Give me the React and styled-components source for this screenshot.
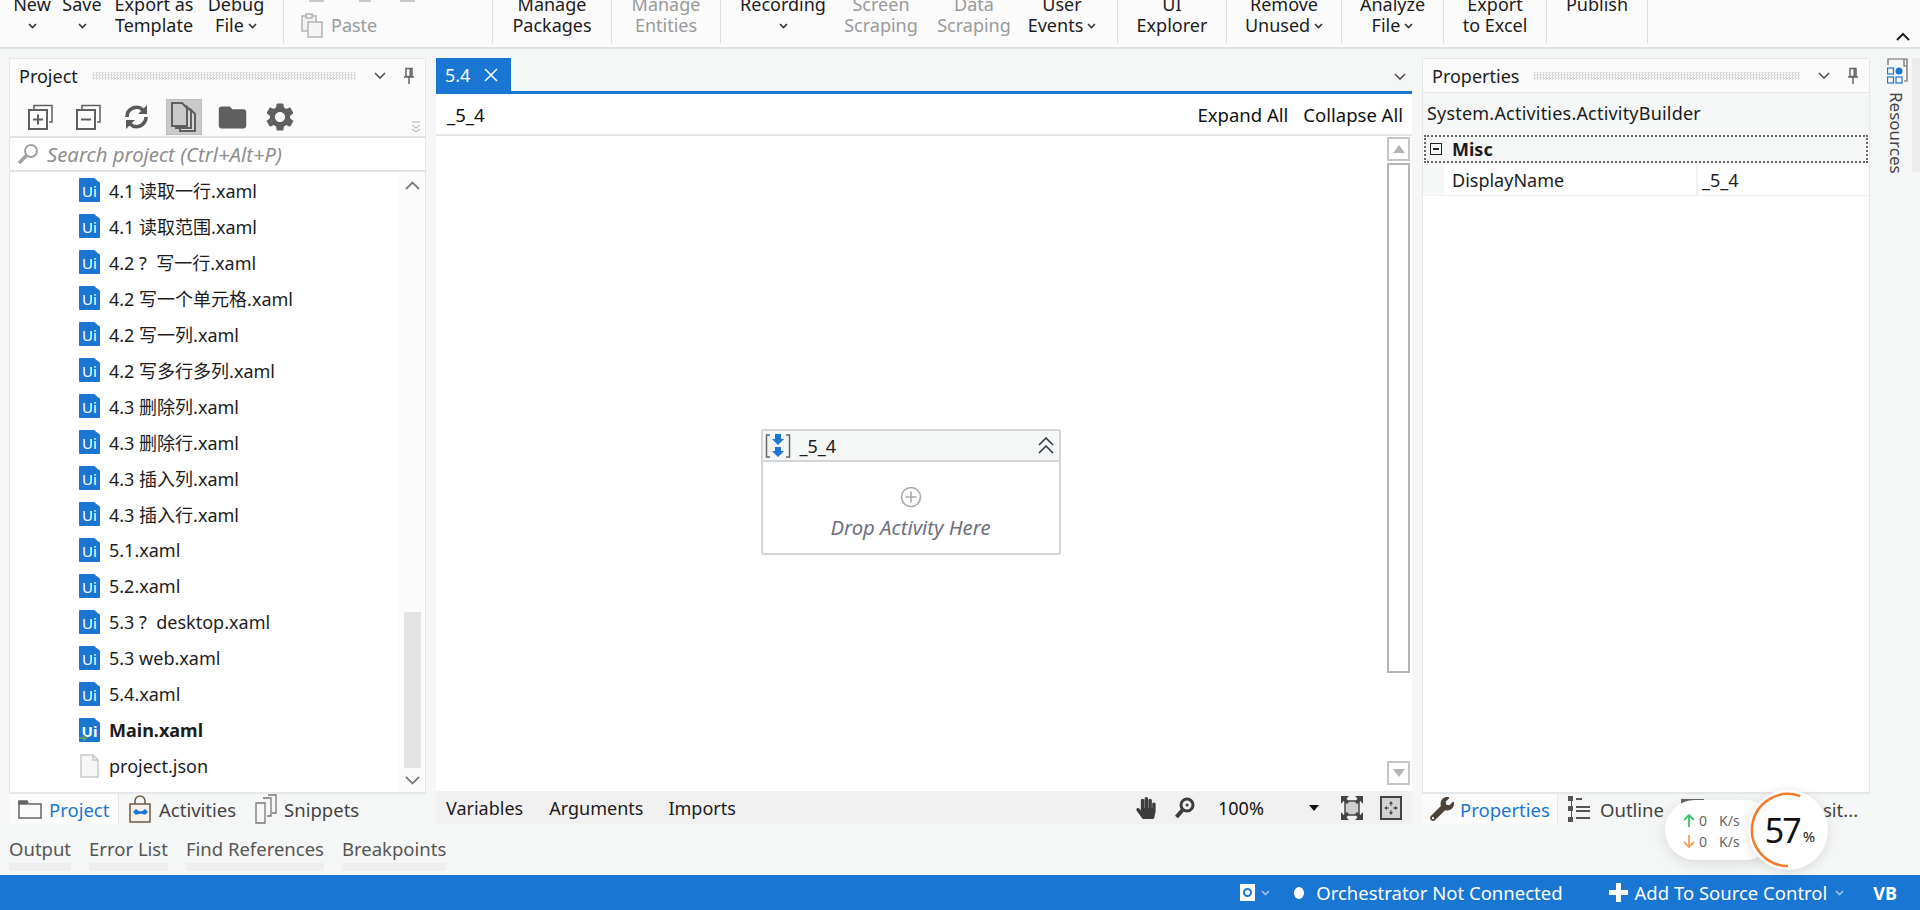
import styled, { createGlobalStyle } from 'styled-components';
import { FaHandPaper, FaWrench } from 'react-icons/fa';
import { MdSettings, MdFolder } from 'react-icons/md';

const GlobalStyle = createGlobalStyle`
  html, body { margin: 0; padding: 0; background: #f5f6f6; }
  * { box-sizing: border-box; }
  body {
    font-family: "Noto Sans", "Noto Sans CJK SC", sans-serif;
    font-size: 18px;
    color: #1c1c1c;
  }
`;

const Page = styled.div`
  position: relative;
  width: 1920px;
  height: 910px;
  overflow: hidden;
  display: flex;
  flex-direction: column;
  background: #f5f6f6;
`;

/* ribbon, cut off at the top like the capture */
const Ribbon = styled.div`
  height: 49px;
  flex: none;
  display: flex;
  align-items: flex-start;
  background: #fbfbfb;
  border-bottom: 2px solid #dfe0e3;
  overflow: hidden;
`;
const RibbonItem = styled.div`
  width: ${(p) => p.$w}px;
  flex: none;
  display: flex;
  flex-direction: column;
  align-items: center;
  margin-top: -6px;
  line-height: 21px;
  font-size: 18px;
  white-space: nowrap;
  color: ${(p) => (p.$off ? '#9a9a9a' : '#1c1c1c')};
`;
const RibbonSep = styled.div`
  width: 1px;
  height: 43px;
  flex: none;
  margin-left: ${(p) => p.$before || 0}px;
  background: #dcdde0;
`;
const Chev = styled.svg`
  width: 9px;
  height: 6px;
  margin-left: ${(p) => p.$ml || 0}px;
  fill: none;
  stroke: ${(p) => p.$c || '#333'};
  stroke-width: 1.6;
`;
const ChevLine = styled.span`
  height: 21px;
  display: flex;
  align-items: center;
`;
const ClipGroup = styled.div`
  width: 208px;
  flex: none;
  height: 47px;
  padding-left: 17px;
  display: flex;
  flex-direction: column;
  color: #9a9a9a;
`;
const ClipTop = styled.div`
  height: 2px;
  flex: none;
  display: flex;
`;
const ClipStub = styled.span`
  width: ${(p) => p.$w}px;
  margin-left: ${(p) => p.$ml}px;
  background: #c8c8c8;
`;
const PasteRow = styled.div`
  display: flex;
  align-items: center;
  gap: 8px;
  height: 26px;
  margin-top: 10px;
`;
const Collapse = styled.svg`
  position: absolute;
  left: 1896px;
  top: 32px;
  width: 14px;
  height: 9px;
  fill: none;
  stroke: #222;
  stroke-width: 2;
`;

const Workspace = styled.div`
  height: 777px;
  flex: none;
  display: grid;
  grid-template-columns: 417px 976px 448px 40px;
  column-gap: 10px;
  padding: 9px 0 2px 9px;
`;

const Panel = styled.section`
  display: flex;
  flex-direction: column;
  min-height: 0;
`;
const DockBody = styled.div`
  flex: 1;
  min-height: 0;
  display: flex;
  flex-direction: column;
  background: #fff;
  border: 1px solid #e6e7e9;
  border-bottom-width: 2px;
`;
const DockHead = styled.div`
  height: ${(p) => (p.$boxed ? 34 : 33)}px;
  flex: none;
  display: flex;
  align-items: center;
  padding: 0 10px 0 9px;
  background: #fbfbfb;
  font-size: 18px;
  border: ${(p) => (p.$boxed ? '1px solid #e6e7e9' : 'none')};
  border-bottom: none;
`;
const Grip = styled.div`
  flex: 1;
  height: 8px;
  margin: 0 18px 0 14px;
  background: repeating-conic-gradient(#d8d9db 0 25%, transparent 0 50%) 0 0 / 3px 3px;
`;
const HeadChev = styled.svg`
  width: 12px;
  height: 8px;
  fill: none;
  stroke: #555;
  stroke-width: 1.6;
  margin-right: ${(p) => p.$mr || 0}px;
`;

const ToolRow = styled.div`
  height: 46px;
  flex: none;
  display: flex;
  align-items: center;
  position: relative;
  padding: 6px 0 0 6px;
  background: #fbfbfb;
  border-bottom: 2px solid #e2e3e5;
`;
const ToolBtn = styled.span`
  width: ${(p) => (p.$on ? 36 : 48)}px;
  height: 36px;
  flex: none;
  margin: ${(p) => (p.$on ? '0 6px' : '0')};
  display: flex;
  align-items: center;
  justify-content: center;
  color: #5f5f5f;
  background: ${(p) => (p.$on ? '#c9cacc' : 'transparent')};
  border: ${(p) => (p.$on ? '1px solid #bcbdbf' : 'none')};
`;
const ScrollHint = styled.svg`
  position: absolute;
  right: 4px;
  bottom: 3px;
  width: 10px;
  height: 12px;
  fill: none;
  stroke: #aaa;
`;
const SearchRow = styled.div`
  height: 34px;
  flex: none;
  display: flex;
  align-items: center;
  gap: 8px;
  padding-left: 7px;
  background: #fff;
  border-bottom: 2px solid #e2e3e5;
  font-style: italic;
  font-size: 20.3px;
  color: #8e8e8e;
`;
const TreeWrap = styled.div`
  flex: 1;
  min-height: 0;
  display: flex;
`;
const Tree = styled.ul`
  flex: 1;
  list-style: none;
  margin: 0;
  padding: 0;
`;
const TreeRow = styled.li`
  height: 36px;
  display: flex;
  align-items: center;
  gap: 9px;
  padding-left: 69px;
  font-size: 18px;
  white-space: pre;
  font-weight: ${(p) => (p.$bold ? 700 : 400)};
`;
const UiBadge = styled.span`
  position: relative;
  width: 21px;
  height: 24px;
  flex: none;
  display: flex;
  align-items: center;
  justify-content: center;
  background: #1976d2;
  clip-path: polygon(0 0, 72% 0, 100% 20%, 100% 100%, 0 100%);
  border-radius: 1px;
  color: #fff;
  font-size: 15px;
  line-height: 1;
  padding-top: 2px;
`;
const RunMark = styled.svg`
  position: absolute;
  left: 0;
  bottom: 0;
  width: 9px;
  height: 8px;
  fill: #4f9c76;
`;
const TreeScroll = styled.div`
  width: 26px;
  flex: none;
  display: flex;
  flex-direction: column;
  align-items: center;
  background: #fbfbfb;
  padding: 9px 0 7px;
`;
const ScrollChev = styled.svg`
  width: 15px;
  height: 9px;
  flex: none;
  fill: none;
  stroke: #7d7d7d;
  stroke-width: 1.8;
`;
const ScrollThumb = styled.div`
  width: 17px;
  height: 156px;
  flex: none;
  margin-top: auto;
  margin-bottom: 8px;
  background: #e2e3e5;
`;

const DockTabs = styled.div`
  height: 30px;
  flex: none;
  display: flex;
  align-items: stretch;
`;
const DockTab = styled.div`
  width: ${(p) => (p.$w ? `${p.$w}px` : 'auto')};
  flex: none;
  display: flex;
  align-items: center;
  gap: ${(p) => p.$gap || 6}px;
  padding-left: ${(p) => p.$pl || 0}px;
  background: ${(p) => (p.$on ? '#fbfbfb' : 'transparent')};
  border-right: ${(p) => (p.$on ? '1px solid #e6e7e9' : 'none')};
  color: ${(p) => (p.$on ? '#1976d2' : '#444')};
  font-size: 18.5px;
  white-space: nowrap;
`;

const DocTabs = styled.div`
  height: 36px;
  flex: none;
  display: flex;
  align-items: flex-start;
  justify-content: space-between;
  border-bottom: 3px solid #1976d2;
  box-shadow: 0 1px 0 #d6e3f2;
`;
const DocTab = styled.div`
  width: 75px;
  height: 33px;
  display: flex;
  align-items: center;
  gap: 14px;
  padding-left: 9px;
  background: #1976d2;
  color: #fff;
  font-size: 18px;
`;
const DocChev = styled(HeadChev)`
  margin: 15px 6px 0 0;
`;
const SubHead = styled.div`
  height: 42px;
  flex: none;
  display: flex;
  align-items: center;
  padding: 0 9px 0 11px;
  background: #fff;
  border-bottom: 2px solid #e4e4e4;
  font-size: 18.5px;
  color: #111;
`;
const SubActions = styled.div`
  margin-left: auto;
  display: flex;
  gap: 15px;
`;
const CanvasArea = styled.div`
  flex: 1;
  min-height: 0;
  display: flex;
  background: #fff;
`;
const Canvas = styled.div`
  flex: 1;
  display: flex;
  flex-direction: column;
  align-items: center;
  padding: 293px 2px 0 0;
`;
const Activity = styled.div`
  width: 300px;
  height: 126px;
  display: flex;
  flex-direction: column;
  border: 2px solid #d4d5d9;
  border-radius: 3px;
`;
const ActivityHead = styled.div`
  height: 31px;
  flex: none;
  display: flex;
  align-items: center;
  padding: 0 5px 0 2px;
  background: #f5f6f6;
  border-bottom: 2px solid #d4d5d9;
  gap: 9px;
  font-size: 18px;
`;
const ActivityToggle = styled.span`
  margin-left: auto;
  display: flex;
`;
const ActivityBody = styled.div`
  flex: 1;
  display: flex;
  flex-direction: column;
  align-items: center;
  padding-top: 24px;
  gap: 5px;
  font-style: italic;
  font-size: 20.3px;
  color: #6f7080;
`;
const VScroll = styled.div`
  width: 25px;
  flex: none;
  display: flex;
  flex-direction: column;
  padding: 1px 2px 6px 0;
`;
const ScrollBtn = styled.div`
  height: 24px;
  flex: none;
  display: flex;
  align-items: center;
  justify-content: center;
  border: 2px solid #c4c4c4;
  margin-top: ${(p) => p.$mt || 0}px;
`;
const ScrollTri = styled.span`
  width: 0;
  height: 0;
  border-left: 6px solid transparent;
  border-right: 6px solid transparent;
  ${(p) => (p.$down ? 'border-top: 8px solid #b4b4b4;' : 'border-bottom: 8px solid #b4b4b4;')}
`;
const ScrollTrack = styled.div`
  height: 510px;
  flex: none;
  margin-top: 2px;
  border: 2px solid #b4b4b4;
`;
const DesignerBar = styled.div`
  height: 33px;
  flex: none;
  display: flex;
  align-items: center;
  background: #f1f1f1;
  padding: 0 10px;
  font-size: 18px;
`;
const BarLink = styled.span`
  margin-right: ${(p) => p.$mr}px;
`;
const BarTools = styled.div`
  margin-left: auto;
  display: flex;
  align-items: center;
  gap: 17px;
  color: #3c3c3c;
`;
const ZoomValue = styled.span`
  width: 106px;
  margin-left: 5px;
  display: flex;
  align-items: center;
  justify-content: space-between;
  padding-right: 5px;
  color: #111;
`;
const BlackTri = styled.span`
  border-left: 5px solid transparent;
  border-right: 5px solid transparent;
  border-top: 6px solid #111;
`;

const TypeRow = styled.div`
  height: 41px;
  flex: none;
  display: flex;
  align-items: center;
  padding: 0 0 2px 4px;
  background: #f5f6f6;
  font-size: 18px;
  letter-spacing: 0.2px;
  white-space: nowrap;
`;
const MiscRow = styled.div`
  height: 28px;
  flex: none;
  margin: 1px 1px 0 1px;
  display: flex;
  align-items: center;
  gap: 10px;
  padding-left: 4px;
  background: #f5f6f6;
  border: 2px dotted #666;
  font-weight: 700;
  font-size: 18px;
`;
const MinusBox = styled.span`
  width: 12px;
  height: 12px;
  flex: none;
  display: flex;
  align-items: center;
  justify-content: center;
  border: 1px solid #222;
`;
const MinusDash = styled.span`
  width: 6px;
  height: 2px;
  background: #222;
`;
const PropRow = styled.div`
  height: 32px;
  flex: none;
  margin-top: 1px;
  display: grid;
  grid-template-columns: 21px 254px 1fr;
  border-bottom: 1px solid #f1f1f1;
  font-size: 18px;
`;
const PropGutter = styled.span`
  background: #f5f6f6;
`;
const PropCell = styled.span`
  display: flex;
  align-items: center;
  padding-left: ${(p) => p.$pl}px;
  border-right: ${(p) => (p.$line ? '2px solid #f1f1f1' : 'none')};
`;

const Rail = styled.aside`
  position: relative;
  display: flex;
  flex-direction: column;
  align-items: flex-start;
  padding-left: 7px;
  gap: 8px;
`;
const RailStrip = styled.div`
  position: absolute;
  right: 0;
  top: 0;
  width: 8px;
  height: 114px;
  background: #ececed;
`;
const RailLabel = styled.span`
  writing-mode: vertical-rl;
  font-size: 17px;
  line-height: 18px;
  color: #444;
`;

const BottomTabs = styled.div`
  height: 49px;
  flex: none;
  display: flex;
  gap: 18px;
  padding: 12px 0 0 9px;
`;
const BottomTab = styled.div`
  display: flex;
  flex-direction: column;
  gap: 4px;
  font-size: 18.5px;
  line-height: 21px;
  color: #555;
`;
const BottomBar = styled.span`
  height: 8px;
  background: #eeeeee;
`;

const StatusBar = styled.footer`
  height: 35px;
  flex: none;
  display: flex;
  align-items: center;
  justify-content: flex-end;
  padding-right: 23px;
  background: #1976d2;
  color: #fff;
  font-size: 18.5px;
`;
const OrchBox = styled.span`
  width: 15px;
  height: 17px;
  display: flex;
  align-items: center;
  justify-content: center;
  background: #fff;
`;
const OrchRing = styled.span`
  width: 9px;
  height: 9px;
  border: 2px solid #1976d2;
  border-radius: 50%;
`;
const StatusDot = styled.span`
  width: 10px;
  height: 12px;
  border-radius: 50%;
  background: #fff;
  margin: 0 12px 0 24px;
`;
const StatusPlus = styled.svg`
  width: 19px;
  height: 19px;
  fill: #fff;
  margin: 0 7px 0 46px;
`;
const StatusVb = styled.b`
  margin-left: 29px;
  font-size: 18px;
`;

const SpeedPill = styled.div`
  position: absolute;
  left: 1665px;
  top: 800px;
  width: 110px;
  height: 60px;
  padding: 10px 0 0 18px;
  border-radius: 30px;
  background: #fff;
  box-shadow: 0 3px 14px rgba(0, 0, 0, 0.12);
  font-size: 14px;
  color: #666;
`;
const SpeedLine = styled.div`
  height: 21px;
  display: flex;
  align-items: center;
  gap: 4px;
`;
const SpeedArrow = styled.svg`
  width: 12px;
  height: 13px;
  fill: none;
  stroke: ${(p) => p.$c};
  stroke-width: 1.8;
`;
const SpeedUnit = styled.span`
  margin-left: 8px;
`;
const Gauge = styled.div`
  position: absolute;
  left: 1748px;
  top: 790px;
  width: 80px;
  height: 80px;
  display: flex;
  align-items: center;
  justify-content: center;
  padding-left: 4px;
  border-radius: 50%;
  background: #fff;
  box-shadow: 0 2px 12px rgba(0, 0, 0, 0.12);
`;
const GaugeArc = styled.svg`
  position: absolute;
  inset: 0;
  fill: none;
  stroke: #f47b2b;
  stroke-width: 2.5;
`;
const GaugeValue = styled.span`
  font-size: 34px;
  letter-spacing: -2px;
  line-height: 1;
  color: #111;
`;
const GaugeUnit = styled.span`
  font-size: 15px;
  margin: 12px 0 0 3px;
  color: #222;
`;

const ChevDown = ({ c, ml }) => (
  <Chev viewBox="0 0 9 6" $c={c} $ml={ml}>
    <path d="M1 1l3.5 3.5L8 1" />
  </Chev>
);

const RibbonBtn = ({ w, off, top, bottom, chev }) => (
  <RibbonItem $w={w} $off={off}>
    <span>{top}</span>
    <ChevLine>
      {bottom}
      {chev && <ChevDown ml={bottom ? 4 : 0} />}
    </ChevLine>
  </RibbonItem>
);

const Pin = () => (
  <svg width="12" height="18" viewBox="0 0 12 18" fill="none" stroke="#666" strokeWidth="1.5">
    <path d="M3 1.5h6v8H3zM1 10h10M6 10v7" />
    <path d="M6.5 2h2v7h-2z" fill="#666" stroke="none" />
  </svg>
);

const GroupIcon = ({ minus }) => (
  <svg width="25" height="26" viewBox="0 0 25 26" fill="none" stroke="#5f5f5f" strokeWidth="2">
    <path d="M6 5V1.5h18V18h-3" strokeWidth="1.5" />
    <rect x="1" y="6" width="18" height="19" />
    <path d="M5 15.5h10" />
    {!minus && <path d="M10 10.5v10" />}
  </svg>
);

const RefreshIcon = () => (
  <svg width="27" height="26" viewBox="0 0 27 26" fill="none" stroke="#5a5a5a" strokeWidth="3.6">
    <path d="M4 13a9.5 9.5 0 0 1 16-7" />
    <path d="M23 13a9.5 9.5 0 0 1-16 7" />
    <path d="M24 1v9h-9zM3 25v-9h9z" fill="#5a5a5a" stroke="none" />
  </svg>
);

const PagesIcon = () => (
  <svg width="26" height="30" viewBox="0 0 26 30" fill="#d5d6d8" stroke="#5f5f5f" strokeWidth="2">
    <path d="M9 7h10l5 5v17H9z" />
    <path d="M5 4h10l5 5v17H5z" />
    <path d="M1 1h10l5 5v18H1z" fill="#c9cacc" />
  </svg>
);

const SearchGlass = () => (
  <svg width="22" height="22" viewBox="0 0 22 22" fill="none" stroke="#a0a0a0">
    <circle cx="14" cy="8" r="6" strokeWidth="2" />
    <path d="M9.5 12.5L2 20" strokeWidth="3.5" />
  </svg>
);

const FileBadge = ({ run }) => (
  <UiBadge>
    Ui
    {run && (
      <RunMark viewBox="0 0 9 8">
        <path d="M0 3h4V0l5 4-5 4V5H0z" />
      </RunMark>
    )}
  </UiBadge>
);

const PlainFile = () => (
  <svg width="21" height="24" viewBox="0 0 21 24" fill="#f6f6f6" stroke="#c9c9c9" strokeWidth="1.5">
    <path d="M2 1h12l5 5v17H2z" />
    <path d="M14 1v5h5" fill="none" />
  </svg>
);

const ActivitiesIcon = () => (
  <svg width="24" height="28" viewBox="0 0 24 28" fill="none" stroke="#6b5a45" strokeWidth="1.5">
    <path d="M2 9h20v18H2z" fill="#f6f1ea" />
    <path d="M7 9V6a5 5 0 0 1 10 0v3" />
    <path d="M6 17l2-2 3 2h3l3-2 2 2-2 2-3-1h-2l-4 1z" fill="#1976d2" stroke="#1976d2" />
  </svg>
);

const SnippetsIcon = () => (
  <svg width="24" height="30" viewBox="0 0 24 30" fill="#f5f6f6" stroke="#777" strokeWidth="1.3">
    <path d="M14 1h8v18h-4" />
    <path d="M9 4h8v18h-4" />
    <path d="M2 9h9v20H2z" />
  </svg>
);

const FolderTabIcon = () => (
  <svg width="24" height="20" viewBox="0 0 24 20" fill="none" stroke="#666" strokeWidth="1.5">
    <path d="M1 3h8l2 2h12v14H1z" />
    <path d="M1 2h8v3H1z" fill="#666" />
  </svg>
);

const OutlineIcon = () => (
  <svg width="22" height="26" viewBox="0 0 22 26" fill="#555">
    <path d="M0 0h5v5H0zM0 10h5v5H0zM8 10h14v2H8zM8 14h14v2H8zM3 5h1v5H3zM0 21h5v5H0zM3 15h1v6H3zM8 21h14v2H8zM8 2h6v2H8z" />
  </svg>
);

const SequenceIcon = () => (
  <svg width="26" height="26" viewBox="0 0 26 26" fill="none">
    <path d="M5 2H1.5v22H5M21 2h3.5v22H21" stroke="#666" strokeWidth="1.5" />
    <path d="M10 1h6v5h3l-6 6-6-6h3zM10 14h6v4h3l-6 6-6-6h3z" fill="#1976d2" />
  </svg>
);

const DoubleUp = () => (
  <svg width="16" height="17" viewBox="0 0 16 17" fill="none" stroke="#2b3240" strokeWidth="1.5">
    <path d="M1 8l7-7 7 7M1 16l7-7 7 7" />
  </svg>
);

const PlusCircle = () => (
  <svg width="22" height="22" viewBox="0 0 22 22" fill="none" stroke="#a9a9a9" strokeWidth="1.6">
    <circle cx="11" cy="11" r="9.5" />
    <path d="M5.5 11h11M11 5.5v11" />
  </svg>
);

const MagnifierTool = () => (
  <svg width="22" height="24" viewBox="0 0 22 24" fill="none" stroke="#3c3c3c">
    <circle cx="13" cy="9" r="6" strokeWidth="3" />
    <circle cx="13" cy="9" r="1.5" fill="#3c3c3c" stroke="none" />
    <path d="M8.5 14L2.5 21" strokeWidth="4" />
  </svg>
);

const FitIcon = () => (
  <svg width="22" height="24" viewBox="0 0 22 24" fill="#444">
    <rect x="4" y="5" width="14" height="14" fill="#cfcfcf" stroke="#444" strokeWidth="1.5" />
    <path d="M0 0h8L5.500 2.500 8 6 6 8 2.500 5 0 8zM22 0v8l-2.500-3L16 8l-2-2 2.500-3.500L14 0zM0 24v-8l2.500 3L6 16l2 2-2.500 3.500L8 24zM22 24h-8l2.500-2.500L14 18l2-2 3.500 3 2.500-3z" />
  </svg>
);

const ActualSizeIcon = () => (
  <svg width="22" height="24" viewBox="0 0 22 24" fill="#444">
    <rect x="1" y="1" width="20" height="22" fill="#d2d2d2" stroke="#444" strokeWidth="2" />
    <path d="M11 5l2 3h-1.500v2h-1V8H9zM11 19l-2-3h1.500v-2h1v2H13zM4 12l3-2v1.500h2v1H7V14zM18 12l-3-2v1.500h-2v1h2V14z" />
  </svg>
);

const ResourcesIcon = () => (
  <svg width="21" height="26" viewBox="0 0 21 26" fill="none" stroke="#666" strokeWidth="1.2">
    <path d="M1 7V1h19v22h-3M17 1v7h3" />
    <rect x="0.5" y="10" width="6" height="6" stroke="#1976d2" />
    <rect x="0.5" y="19" width="6" height="6" stroke="#1976d2" />
    <rect x="9" y="19" width="6" height="6" stroke="#1976d2" />
    <circle cx="12" cy="13" r="3.5" fill="#1976d2" stroke="none" />
  </svg>
);

const files = [
  '4.1 读取一行.xaml',
  '4.1 读取范围.xaml',
  '4.2 ?  写一行.xaml',
  '4.2 写一个单元格.xaml',
  '4.2 写一列.xaml',
  '4.2 写多行多列.xaml',
  '4.3 删除列.xaml',
  '4.3 删除行.xaml',
  '4.3 插入列.xaml',
  '4.3 插入行.xaml',
  '5.1.xaml',
  '5.2.xaml',
  '5.3 ?  desktop.xaml',
  '5.3 web.xaml',
  '5.4.xaml',
];

const App = () => (
  <Page>
    <GlobalStyle />
    <Ribbon>
      <RibbonBtn w={64} top="New" chev />
      <RibbonBtn w={36} top="Save" chev />
      <RibbonBtn w={108} top="Export as" bottom="Template" />
      <RibbonBtn w={56} top="Debug" bottom="File" chev />
      <RibbonSep $before={19} />
      <ClipGroup>
        <ClipTop>
          <ClipStub $w={15} $ml={8} />
          <ClipStub $w={12} $ml={35} />
          <ClipStub $w={15} $ml={29} />
        </ClipTop>
        <PasteRow>
          <svg width="22" height="26" viewBox="0 0 22 26" fill="#f4f4f4" stroke="#b4b4b4" strokeWidth="1.5">
            <path d="M1 4h14v15H1z" />
            <path d="M5 2h6v4H5z" />
            <path d="M7 10h14v15H7z" />
          </svg>
          <span>Paste</span>
        </PasteRow>
      </ClipGroup>
      <RibbonSep />
      <RibbonBtn w={118} top="Manage" bottom="Packages" />
      <RibbonSep />
      <RibbonBtn w={108} off top="Manage" bottom="Entities" />
      <RibbonSep />
      <RibbonBtn w={124} top="Recording" chev />
      <RibbonBtn w={72} off top="Screen" bottom="Scraping" />
      <RibbonBtn w={114} off top="Data" bottom="Scraping" />
      <RibbonBtn w={62} top="User" bottom="Events" chev />
      <RibbonSep $before={24} />
      <RibbonBtn w={108} top="UI" bottom="Explorer" />
      <RibbonSep />
      <RibbonBtn w={114} top="Remove" bottom="Unused" chev />
      <RibbonSep />
      <RibbonBtn w={101} top="Analyze" bottom="File" chev />
      <RibbonSep />
      <RibbonBtn w={102} top="Export" bottom="to Excel" />
      <RibbonSep />
      <RibbonBtn w={100} top="Publish" />
      <RibbonSep />
    </Ribbon>
    <Collapse viewBox="0 0 14 9">
      <path d="M1 8l6-6 6 6" />
    </Collapse>

    <Workspace>
      <Panel>
        <DockBody>
          <DockHead>
            Project
            <Grip />
            <HeadChev viewBox="0 0 12 8" $mr={17}>
              <path d="M1 1l5 5 5-5" />
            </HeadChev>
            <Pin />
          </DockHead>
          <ToolRow>
            <ToolBtn><GroupIcon /></ToolBtn>
            <ToolBtn><GroupIcon minus /></ToolBtn>
            <ToolBtn><RefreshIcon /></ToolBtn>
            <ToolBtn $on><PagesIcon /></ToolBtn>
            <ToolBtn><MdFolder size={33} /></ToolBtn>
            <ToolBtn><MdSettings size={34} /></ToolBtn>
            <ScrollHint viewBox="0 0 10 12">
              <path d="M1 1h8M1 4l4 3 4-3M1 8l4 3 4-3" />
            </ScrollHint>
          </ToolRow>
          <SearchRow>
            <SearchGlass />
            Search project (Ctrl+Alt+P)
          </SearchRow>
          <TreeWrap>
            <Tree>
              {files.map((name) => (
                <TreeRow key={name}>
                  <FileBadge />
                  {name}
                </TreeRow>
              ))}
              <TreeRow $bold>
                <FileBadge run />
                Main.xaml
              </TreeRow>
              <TreeRow>
                <PlainFile />
                project.json
              </TreeRow>
            </Tree>
            <TreeScroll>
              <ScrollChev viewBox="0 0 15 9"><path d="M1 8l6.500-6.500L14 8" /></ScrollChev>
              <ScrollThumb />
              <ScrollChev viewBox="0 0 15 9"><path d="M1 1l6.500 6.500L14 1" /></ScrollChev>
            </TreeScroll>
          </TreeWrap>
        </DockBody>
        <DockTabs>
          <DockTab $on $w={110} $pl={9} $gap={7}>
            <FolderTabIcon />
            Project
          </DockTab>
          <DockTab $pl={9} $gap={7}>
            <ActivitiesIcon />
            Activities
          </DockTab>
          <DockTab $pl={18} $gap={6}>
            <SnippetsIcon />
            Snippets
          </DockTab>
        </DockTabs>
      </Panel>

      <Panel>
        <DocTabs>
          <DocTab>
            5.4
            <svg width="14" height="14" viewBox="0 0 14 14" stroke="#fff" strokeWidth="1.5">
              <path d="M1 1l12 12M13 1L1 13" />
            </svg>
          </DocTab>
          <DocChev viewBox="0 0 12 8">
            <path d="M1 1l5 5 5-5" />
          </DocChev>
        </DocTabs>
        <SubHead>
          _5_4
          <SubActions>
            <span>Expand All</span>
            <span>Collapse All</span>
          </SubActions>
        </SubHead>
        <CanvasArea>
          <Canvas>
            <Activity>
              <ActivityHead>
                <SequenceIcon />
                _5_4
                <ActivityToggle><DoubleUp /></ActivityToggle>
              </ActivityHead>
              <ActivityBody>
                <PlusCircle />
                Drop Activity Here
              </ActivityBody>
            </Activity>
          </Canvas>
          <VScroll>
            <ScrollBtn><ScrollTri /></ScrollBtn>
            <ScrollTrack />
            <ScrollBtn $mt={88}><ScrollTri $down /></ScrollBtn>
          </VScroll>
        </CanvasArea>
        <DesignerBar>
          <BarLink $mr={26}>Variables</BarLink>
          <BarLink $mr={25}>Arguments</BarLink>
          <BarLink $mr={0}>Imports</BarLink>
          <BarTools>
            <FaHandPaper size={22} />
            <MagnifierTool />
            <ZoomValue>
              100%
              <BlackTri />
            </ZoomValue>
            <FitIcon />
            <ActualSizeIcon />
          </BarTools>
        </DesignerBar>
      </Panel>

      <Panel>
        <DockHead $boxed>
          Properties
          <Grip />
          <HeadChev viewBox="0 0 12 8" $mr={17}>
            <path d="M1 1l5 5 5-5" />
          </HeadChev>
          <Pin />
        </DockHead>
        <DockBody>
          <TypeRow>System.Activities.ActivityBuilder</TypeRow>
          <MiscRow>
            <MinusBox><MinusDash /></MinusBox>
            Misc
          </MiscRow>
          <PropRow>
            <PropGutter />
            <PropCell $pl={8} $line>DisplayName</PropCell>
            <PropCell $pl={4}>_5_4</PropCell>
          </PropRow>
        </DockBody>
        <DockTabs>
          <DockTab $on $w={136} $pl={8} $gap={6}>
            <FaWrench size={24} color="#4b4238" />
            Properties
          </DockTab>
          <DockTab $pl={10} $gap={10}>
            <OutlineIcon />
            Outline
          </DockTab>
          <DockTab $pl={17} $gap={13}>
            <svg width="23" height="20" viewBox="0 0 23 20" fill="#666">
              <rect width="23" height="20" />
            </svg>
            Object Reposit...
          </DockTab>
        </DockTabs>
      </Panel>

      <Rail>
        <RailStrip />
        <ResourcesIcon />
        <RailLabel>Resources</RailLabel>
      </Rail>
    </Workspace>

    <BottomTabs>
      <BottomTab>Output<BottomBar /></BottomTab>
      <BottomTab>Error List<BottomBar /></BottomTab>
      <BottomTab>Find References<BottomBar /></BottomTab>
      <BottomTab>Breakpoints<BottomBar /></BottomTab>
    </BottomTabs>

    <StatusBar>
      <OrchBox><OrchRing /></OrchBox>
      <ChevDown c="#9cc4ea" ml={6} />
      <StatusDot />
      Orchestrator Not Connected
      <StatusPlus viewBox="0 0 19 19">
        <path d="M7 0h5v7h7v5h-7v7H7v-7H0V7h7z" />
      </StatusPlus>
      Add To Source Control
      <ChevDown c="#9cc4ea" ml={8} />
      <StatusVb>VB</StatusVb>
    </StatusBar>

    <SpeedPill>
      <SpeedLine>
        <SpeedArrow viewBox="0 0 12 13" $c="#3cc46c"><path d="M6 13V1M1 6l5-5 5 5" /></SpeedArrow>
        0<SpeedUnit>K/s</SpeedUnit>
      </SpeedLine>
      <SpeedLine>
        <SpeedArrow viewBox="0 0 12 13" $c="#f4a05c"><path d="M6 0v12M1 7l5 5 5-5" /></SpeedArrow>
        0<SpeedUnit>K/s</SpeedUnit>
      </SpeedLine>
    </SpeedPill>
    <Gauge>
      <GaugeArc viewBox="0 0 80 80">
        <path d="M52.300 6.200A36 36 0 1 0 40 76" />
      </GaugeArc>
      <GaugeValue>57</GaugeValue>
      <GaugeUnit>%</GaugeUnit>
    </Gauge>
  </Page>
);

export default App;
